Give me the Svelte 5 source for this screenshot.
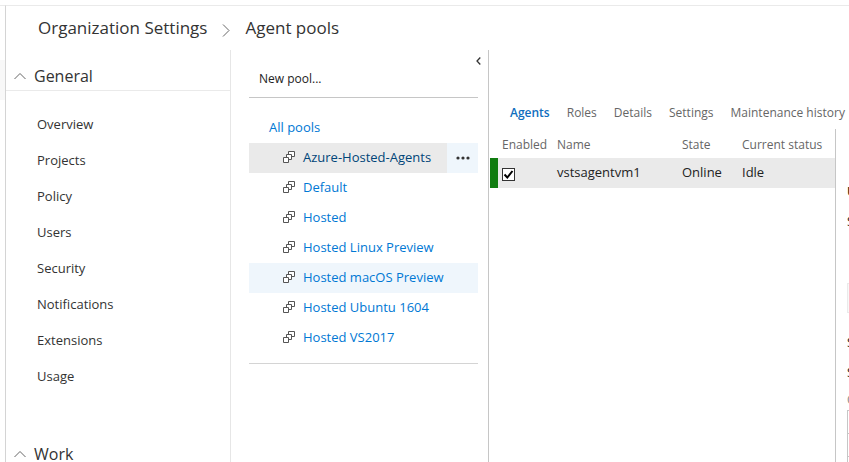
<script>
  const general = ['Overview', 'Projects', 'Policy', 'Users', 'Security', 'Notifications', 'Extensions', 'Usage'];
  const pools = [
    'Azure-Hosted-Agents',
    'Default',
    'Hosted',
    'Hosted Linux Preview',
    'Hosted macOS Preview',
    'Hosted Ubuntu 1604',
    'Hosted VS2017'
  ];
  const tabs = ['Agents', 'Roles', 'Details', 'Settings', 'Maintenance history'];
  let selected = $state('Azure-Hosted-Agents');
  let enabled = $state(true);
</script>

{#snippet chevron()}
  <svg width="12" height="8" viewBox="0 0 12 8" aria-hidden="true"><path d="M.5 7 6 1.5 11.500 7" fill="none" stroke="#666" /></svg>
{/snippet}

<div class="app">
  <div class="rail"><div class="mark"></div></div>
  <div class="page">
    <header>
      <a href="#settings">Organization Settings</a>
      <svg width="8" height="13" viewBox="0 0 8 13" aria-hidden="true"><path d="M1 .5 7 6.500 1 12.500" fill="none" stroke="#666" /></svg>
      <span>Agent pools</span>
    </header>
    <div class="body">
      <nav class="sidebar">
        <button class="group ruled">{@render chevron()}General</button>
        <ul>
          {#each general as item}
            <li><a href="#{item}">{item}</a></li>
          {/each}
        </ul>
        <button class="group">{@render chevron()}Work</button>
      </nav>

      <section class="pools">
        <button class="collapse" aria-label="Collapse pane">
          <svg width="5" height="8" viewBox="0 0 5 8" aria-hidden="true"><path d="M4.300.5 1 4l3.300 3.500" fill="none" stroke="#333" stroke-width="1.300" /></svg>
        </button>
        <button class="new">New pool...</button>
        <div class="tree">
          <a class="all" href="#all">All pools</a>
          {#each pools as pool}
            <div class="pool" class:selected={pool === selected} class:hover={pool === 'Hosted macOS Preview'}>
              <a href="#{pool}" onclick={() => (selected = pool)}>
                <svg width="14" height="14" viewBox="0 0 14 14" aria-hidden="true">
                  <g fill="#fff" stroke="#555">
                    <path d="M6.500 1.500h6v5h-6z" />
                    <path d="M4.500 4.500h5v5h-5z" />
                    <path d="M1.500 7.500h5v5h-5z" />
                  </g>
                </svg>
                {pool}
              </a>
              {#if pool === selected}
                <button class="more" aria-label="More actions">
                  <svg width="14" height="4" viewBox="0 0 14 4" aria-hidden="true"><g fill="#333"><circle cx="2" cy="2" r="1.600" /><circle cx="7" cy="2" r="1.600" /><circle cx="12" cy="2" r="1.600" /></g></svg>
                </button>
              {/if}
            </div>
          {/each}
        </div>
      </section>

      <main>
        <div class="tabs">
          {#each tabs as tab}
            <a href="#{tab}" class:active={tab === 'Agents'}>{tab}</a>
          {/each}
        </div>
        <div class="content">
          <div class="list">
            <table>
              <thead>
                <tr><th class="c1">Enabled</th><th class="c2">Name</th><th class="c3">State</th><th>Current status</th></tr>
              </thead>
              <tbody>
                <tr>
                  <td class="check">
                    <label>
                      <input type="checkbox" aria-label="Enabled" bind:checked={enabled} />
                      {#if enabled}
                        <svg width="13" height="13" viewBox="0 0 13 13" aria-hidden="true"><path d="M2.500 6.500 5.300 9.500 10.500 3" fill="none" stroke="#000" stroke-width="2" /></svg>
                      {/if}
                    </label>
                  </td>
                  <td>vstsagentvm1</td>
                  <td>Online</td>
                  <td>Idle</td>
                </tr>
              </tbody>
            </table>
          </div>
          <aside>
            <p class="title">U</p>
            <p>S</p>
            <div class="box"></div>
            <p>S</p>
            <p>S</p>
            <p class="caption">C</p>
            <div class="grid"><div></div><div></div><div></div></div>
          </aside>
        </div>
      </main>
    </div>
  </div>
</div>

<style>
  :global(body) { margin: 0; background: #fff; }
  .app {
    display: flex; height: 100vh; overflow: hidden; padding-top: 5px; box-sizing: border-box;
    font: 13px/20px "Segoe UI", "Open Sans", "Noto Sans", sans-serif; color: #333;
  }
  a { color: inherit; text-decoration: none; }
  button { font: inherit; color: inherit; border: 0; background: none; padding: 0; cursor: pointer; }
  svg { flex: none; }
  .rail { width: 5px; flex: none; border-top: 1px solid #eaeaea; padding-top: 54px; }
  .mark { height: 40px; background: #f8f8f8; }
  .page { flex: 1; min-width: 0; display: flex; flex-direction: column; border-left: 1px solid #d4d4d4; border-top: 1px solid #eaeaea; }
  header { display: flex; align-items: center; gap: 15px; height: 44px; padding-left: 32px; font-size: 17px; white-space: nowrap; }
  header svg { margin-top: 4px; }
  .body { flex: 1; min-height: 0; display: flex; }
  .sidebar { width: 224px; flex: none; border-right: 1px solid #e6e6e6; }
  .group { display: flex; align-items: center; gap: 8px; width: 100%; height: 41px; padding: 11px 0 0 8px; font-size: 16px; box-sizing: border-box; }
  .ruled { border-bottom: 1px solid #eaeaea; }
  .sidebar ul { list-style: none; margin: 0; padding: 15px 0 34px 31px; }
  .sidebar li { line-height: 36px; }
  .sidebar li a { display: block; }
  .pools { width: 257px; flex: none; border-right: 1px solid #c6c6c6; display: flex; flex-direction: column; }
  .collapse { align-self: flex-end; display: flex; margin: 7px 7px 0 0; }
  .new { text-align: left; font-size: 12px; line-height: 20px; color: #222; margin: 4px 10px 0 18px; padding: 0 10px 8px; border-bottom: 1px solid #c6c6c6; }
  .tree { margin: 0 10px 0 18px; padding: 15px 0 10px; border-bottom: 1px solid #d4d4d4; color: #0078d4; }
  .all { display: block; line-height: 28px; padding: 0 0 2px 20px; }
  .pool { display: flex; height: 30px; }
  .pool a { flex: 1; display: flex; align-items: center; gap: 7px; padding: 0 0 2px 33px; white-space: nowrap; }
  .hover, .selected { background: #eff6fc; }
  .selected a { background: #eaeaea; color: #004578; }
  .more { width: 31px; display: grid; place-items: center; }
  main { flex: 1; min-width: 0; display: flex; flex-direction: column; }
  .tabs { display: flex; gap: 17px; padding: 53px 0 6px 21px; font-size: 12px; color: #666; white-space: nowrap; }
  .active { color: #106ebe; font-weight: 600; }
  .content { flex: 1; min-height: 0; display: flex; }
  .list { flex: 1; min-width: 0; padding-left: 1px; }
  table { width: 100%; table-layout: fixed; border-spacing: 0; text-align: left; }
  th, td { box-sizing: border-box; padding: 0; white-space: nowrap; }
  th { height: 29px; padding-top: 3px; font-size: 12px; font-weight: 400; color: #666; }
  .c1 { width: 67px; padding-left: 12px; }
  .c2 { width: 125px; }
  .c3 { width: 60px; }
  td { height: 30px; padding-bottom: 2px; background: #eaeaea; color: #222; }
  .check { border-left: 8px solid #107c10; padding: 2px 0 0 4px; }
  .check label { display: grid; width: 13px; height: 13px; }
  .check input, .check svg { grid-area: 1 / 1; }
  .check svg { pointer-events: none; }
  .check input { appearance: none; box-sizing: border-box; width: 13px; height: 13px; margin: 0; border: 1px solid #333; background: #fff; }
  aside { width: 14px; flex: none; box-sizing: border-box; border-left: 1px solid #c6c6c6; padding: 47px 0 0 11px; }
  aside p { margin: 0; line-height: 30px; color: #222; }
  aside .title { font-weight: 600; }
  aside .caption { margin-top: 3px; font-size: 12px; line-height: 20px; color: #888; }
  .box { margin: 47px 0 14px; height: 30px; box-sizing: border-box; border: 1px solid #eaeaea; border-right: 0; background: #f8f8f8; }
  .grid { border-left: 1px solid #c6c6c6; }
  .grid div { height: 22px; border-top: 1px solid #c6c6c6; }
</style>
